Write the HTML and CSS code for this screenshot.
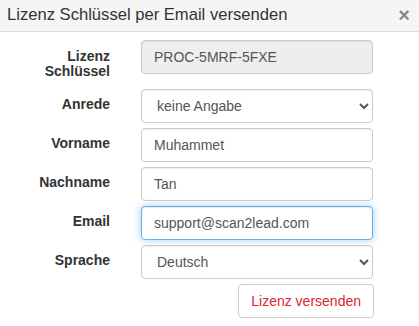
FILE: index.html
```html
<!DOCTYPE html>
<html lang="de">
<head>
  <meta charset="UTF-8">
  <meta name="viewport" content="width=device-width, initial-scale=1.0">
  <title>Lizenz Schlüssel per Email versenden</title>
  <link rel="stylesheet" href="styles.css">
</head>
<body>
  <div class="modal">
    <div class="modal-header">
      <h4 class="modal-title">Lizenz Schlüssel per Email versenden</h4>
      <button type="button" class="close" aria-label="Schließen">&times;</button>
    </div>
    <form class="modal-body" id="licenseForm">
      <label class="control-label" for="licenseKey">Lizenz Schlüssel</label>
      <input class="form-control" type="text" id="licenseKey" value="PROC-5MRF-5FXE" disabled>

      <label class="control-label" for="salutation">Anrede</label>
      <select class="form-control" id="salutation">
        <option>keine Angabe</option>
        <option>Herr</option>
        <option>Frau</option>
      </select>

      <label class="control-label" for="firstName">Vorname</label>
      <input class="form-control" type="text" id="firstName" value="Muhammet">

      <label class="control-label" for="lastName">Nachname</label>
      <input class="form-control" type="text" id="lastName" value="Tan">

      <label class="control-label" for="email">Email</label>
      <input class="form-control focused" type="email" id="email" value="support@scan2lead.com">

      <label class="control-label" for="language">Sprache</label>
      <select class="form-control" id="language">
        <option>Deutsch</option>
        <option>English</option>
      </select>

      <div class="actions">
        <button type="button" class="btn">Lizenz versenden</button>
      </div>
    </form>
  </div>
</body>
</html>
```
FILE: styles.css
```css
:root {
  --text-color: #333;
  --input-text: #555;
  --border-color: #ccc;
  --header-bg: #f5f5f5;
  --focus-color: #66afe9;
  --danger-color: #d9262f;
  --font-family: 'Liberation Sans', Arial, sans-serif;
}
* {
  box-sizing: border-box;
}
body {
  margin: 0;
  background-color: #fff;
  font-family: var(--font-family);
  font-size: 14px;
  color: var(--text-color);
}
.modal {
  width: 419px;
}
.modal-header {
  display: flex;
  align-items: center;
  justify-content: space-between;
  height: 32px;
  padding: 0 9px 1px 7px;
  background-color: var(--header-bg);
  border-bottom: 1px solid #ddd;
}
.modal-title {
  margin: 0;
  font-size: 16.6px;
  font-weight: 400;
  line-height: 20px;
  color: #333;
}
.close {
  padding: 0;
  border: none;
  background: none;
  font-family: var(--font-family);
  font-size: 20px;
  font-weight: 700;
  line-height: 1;
  color: #000;
  opacity: 0.45;
  cursor: pointer;
}
.modal-body {
  display: grid;
  grid-template-columns: 95px 232px;
  column-gap: 31px;
  row-gap: 5px;
  padding: 8px 15px 8px 15px;
}
.control-label {
  padding-top: 8.5px;
  padding-bottom: 5px;
  font-weight: 700;
  line-height: 15px;
  text-align: right;
}
.form-control {
  width: 100%;
  height: 34px;
  padding: 6px 12px;
  font-family: var(--font-family);
  font-size: 14px;
  line-height: 20px;
  color: var(--input-text);
  background-color: #fff;
  border: 1px solid var(--border-color);
  border-radius: 4px;
  box-shadow: inset 0 1px 1px rgba(0, 0, 0, 0.075);
}
select.form-control {
  padding: 6px 8px 6px 11px;
}
.form-control:disabled {
  background-color: #eee;
  opacity: 1;
}
.form-control.focused,
.form-control:focus {
  border-color: var(--focus-color);
  outline: none;
  box-shadow: inset 0 1px 1px rgba(0, 0, 0, 0.075), 0 0 8px rgba(102, 175, 233, 0.6);
}
.actions {
  grid-column: 2;
  display: flex;
  justify-content: flex-end;
  margin-right: -1px;
}
.btn {
  height: 34px;
  padding: 6px 12px;
  font-family: var(--font-family);
  font-size: 14px;
  line-height: 20px;
  color: var(--danger-color);
  background-color: #fff;
  border: 1px solid var(--border-color);
  border-radius: 4px;
  cursor: pointer;
}
```
